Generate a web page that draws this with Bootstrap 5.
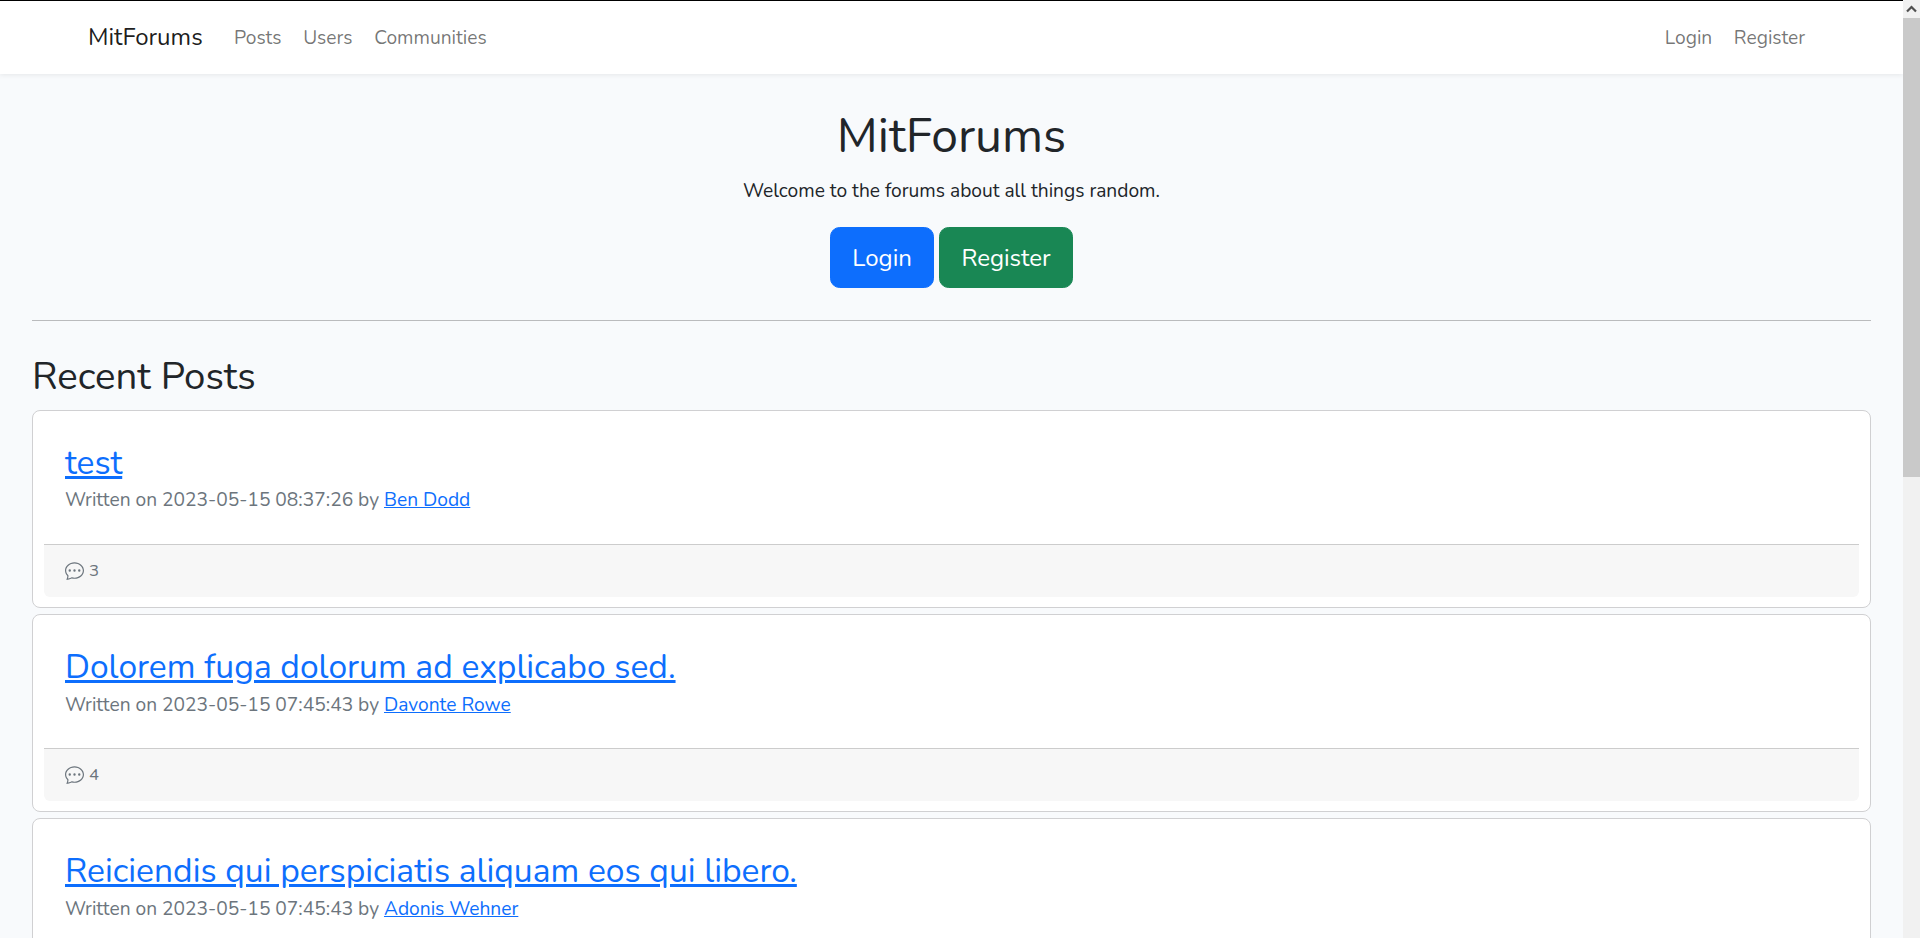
<!doctype html>
<html lang="en">
<head>
<meta charset="utf-8">
<title>MitForums</title>
<link href="https://cdn.jsdelivr.net/npm/bootstrap@5.3.0/dist/css/bootstrap.min.css" rel="stylesheet">
<style>
html{font-size:19.2px}
html,body{font-family:"Nunito","Noto Sans","Open Sans",sans-serif}
body{background:#f8fafc;height:100vh;overflow:hidden}
.view-col{min-width:0;border-top:1px solid #000;overflow:hidden}
.fake-scroll{width:17px;background:#f1f1f1}
.fake-arrow{height:18px;display:flex;align-items:center;justify-content:center}
.fake-arrow svg{width:11px;height:8px}
.fake-thumb{height:459px;background:#c9c9c9}
.top-bar{background:#fff;box-shadow:0 .125rem .25rem rgba(0,0,0,.075);height:73px;padding:0}
.top-bar .container-fluid{padding:0 87px 0 88px}
.top-bar .navbar-brand{color:rgba(0,0,0,.9);margin-right:20.6px}
.top-bar.navbar-expand .navbar-nav .nav-link{padding:11.6px 10.8px 9.6px;color:rgba(0,0,0,.55)}
.page-wrap{padding:0 32px}
.hero{padding-top:34px}
.hero-title{font-weight:400;margin-bottom:11px;line-height:1.2}
.hero-text{margin-bottom:21.5px}
.hero .btn-lg{padding:12.4px 21.3px 10.8px}
.rule{margin:32px 0 33px;border-color:#000;opacity:.25}
.sect-title{font-weight:400;margin-bottom:10px}
.post-card{padding:0 11px 10.4px;margin-bottom:6px;border-radius:8px;border-color:#d0d0d2}
.post-body{padding:32px 21px 28.6px}
.post-title{font-size:1.75rem;line-height:1.2;margin-bottom:3px;font-weight:400}
.post-meta{margin:0;color:#6c757d}
.post-foot{padding:12px 21px;height:53px;border-radius:0 0 6px 6px!important;border-top-color:#ccc;color:#6c757d;font-size:16.8px;background:#f7f7f7;display:flex;align-items:center;gap:5px}
.post-foot svg{width:19px;height:19px}
</style>
</head>
<body class="d-flex">
<div class="view-col flex-grow-1">
<nav class="navbar navbar-expand top-bar">
  <div class="container-fluid">
    <a class="navbar-brand" href="#">MitForums</a>
    <ul class="navbar-nav me-auto">
      <li class="nav-item"><a class="nav-link" href="#">Posts</a></li>
      <li class="nav-item"><a class="nav-link" href="#">Users</a></li>
      <li class="nav-item"><a class="nav-link" href="#">Communities</a></li>
    </ul>
    <ul class="navbar-nav">
      <li class="nav-item"><a class="nav-link" href="#">Login</a></li>
      <li class="nav-item"><a class="nav-link" href="#">Register</a></li>
    </ul>
  </div>
</nav>
<main class="page-wrap">
  <section class="text-center hero">
    <h1 class="hero-title">MitForums</h1>
    <p class="hero-text">Welcome to the forums about all things random.</p>
    <a class="btn btn-primary btn-lg" href="#">Login</a>
    <a class="btn btn-success btn-lg" href="#">Register</a>
  </section>
  <hr class="rule">
  <h2 class="sect-title">Recent Posts</h2>

  <article class="card post-card">
    <div class="post-body">
      <h3 class="post-title"><a href="#">test</a></h3>
      <p class="post-meta">Written on 2023-05-15 08:37:26 by <a href="#">Ben Dodd</a></p>
    </div>
    <div class="card-footer post-foot"><svg viewBox="0 0 16 16" fill="currentColor"><path d="M5 8a1 1 0 1 1-2 0 1 1 0 0 1 2 0zm4 0a1 1 0 1 1-2 0 1 1 0 0 1 2 0zm3 1a1 1 0 1 0 0-2 1 1 0 0 0 0 2z"/><path d="m2.165 15.803.02-.004c1.83-.363 2.948-.842 3.468-1.105A9.06 9.06 0 0 0 8 15c4.418 0 8-3.134 8-7s-3.582-7-8-7-8 3.134-8 7c0 1.76.743 3.37 1.97 4.6a10.437 10.437 0 0 1-.524 2.318l-.003.011a10.722 10.722 0 0 1-.244.637c-.079.186.074.394.273.362a21.673 21.673 0 0 0 .693-.125zm.8-3.108a1 1 0 0 0-.287-.801C1.618 10.83 1 9.468 1 8c0-3.192 3.004-6 7-6s7 2.808 7 6c0 3.193-3.004 6-7 6a8.06 8.06 0 0 1-2.088-.272 1 1 0 0 0-.711.074c-.387.196-1.24.57-2.634.893a10.97 10.97 0 0 0 .398-2z"/></svg><span>3</span></div>
  </article>

  <article class="card post-card">
    <div class="post-body">
      <h3 class="post-title"><a href="#">Dolorem fuga dolorum ad explicabo sed.</a></h3>
      <p class="post-meta">Written on 2023-05-15 07:45:43 by <a href="#">Davonte Rowe</a></p>
    </div>
    <div class="card-footer post-foot"><svg viewBox="0 0 16 16" fill="currentColor"><path d="M5 8a1 1 0 1 1-2 0 1 1 0 0 1 2 0zm4 0a1 1 0 1 1-2 0 1 1 0 0 1 2 0zm3 1a1 1 0 1 0 0-2 1 1 0 0 0 0 2z"/><path d="m2.165 15.803.02-.004c1.83-.363 2.948-.842 3.468-1.105A9.06 9.06 0 0 0 8 15c4.418 0 8-3.134 8-7s-3.582-7-8-7-8 3.134-8 7c0 1.76.743 3.37 1.97 4.6a10.437 10.437 0 0 1-.524 2.318l-.003.011a10.722 10.722 0 0 1-.244.637c-.079.186.074.394.273.362a21.673 21.673 0 0 0 .693-.125zm.8-3.108a1 1 0 0 0-.287-.801C1.618 10.83 1 9.468 1 8c0-3.192 3.004-6 7-6s7 2.808 7 6c0 3.193-3.004 6-7 6a8.06 8.06 0 0 1-2.088-.272 1 1 0 0 0-.711.074c-.387.196-1.24.57-2.634.893a10.97 10.97 0 0 0 .398-2z"/></svg><span>4</span></div>
  </article>

  <article class="card post-card">
    <div class="post-body">
      <h3 class="post-title"><a href="#">Reiciendis qui perspiciatis aliquam eos qui libero.</a></h3>
      <p class="post-meta">Written on 2023-05-15 07:45:43 by <a href="#">Adonis Wehner</a></p>
    </div>
  </article>
</main>
</div>
<aside class="fake-scroll flex-shrink-0" aria-hidden="true">
  <div class="fake-arrow"><svg viewBox="0 0 11 8"><path d="M1 6.5 5.5 2 10 6.5" fill="none" stroke="#505050" stroke-width="2.2"/></svg></div>
  <div class="fake-thumb"></div>
</aside>
</body>
</html>
